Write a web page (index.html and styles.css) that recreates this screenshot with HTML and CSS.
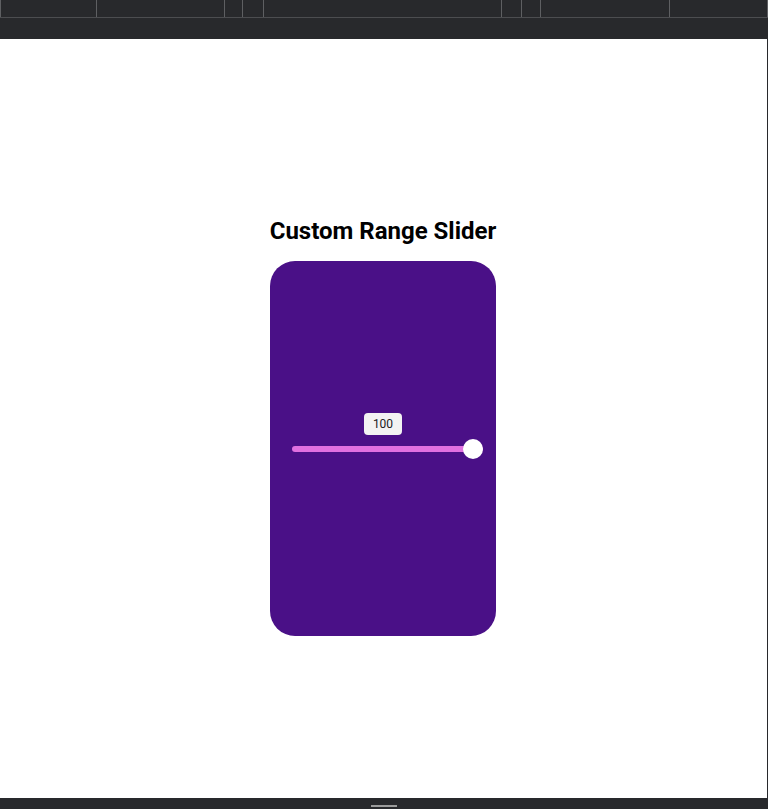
FILE: index.html
```html
<!DOCTYPE html>
<html lang="en">
<head>
<meta charset="utf-8">
<title>Custom Range Slider</title>
<link rel="stylesheet" href="styles.css">
</head>
<body>
<div class="frame">
  <header class="topbar">
    <div class="tabs">
      <span class="seg w96"></span>
      <span class="seg w128"></span>
      <span class="seg w18"></span>
      <span class="seg w21"></span>
      <span class="seg w238"></span>
      <span class="seg w20"></span>
      <span class="seg w19"></span>
      <span class="seg w129"></span>
      <span class="seg w98"></span>
      <span class="seg w1"></span>
    </div>
    <div class="toolbar"></div>
  </header>
  <main class="viewport">
    <h1 class="title">Custom Range Slider</h1>
    <div class="card">
      <div class="slider">
        <span class="badge">100</span>
        <div class="track">
          <span class="thumb"></span>
        </div>
      </div>
    </div>
  </main>
  <footer class="bottombar">
    <span class="handle"></span>
  </footer>
</div>
</body>
</html>
```

FILE: styles.css
```css
* { box-sizing: border-box; }
html, body { margin: 0; padding: 0; }
body {
  background: #ffffff;
  font-family: Roboto, "Liberation Sans", Arial, sans-serif;
}
.frame {
  display: flex;
  flex-direction: column;
  width: 768px;
  height: 809px;
  overflow: hidden;
}
.topbar {
  background: #28292c;
  height: 39px;
  display: flex;
  flex-direction: column;
}
.tabs {
  display: flex;
  height: 18px;
  border-bottom: 1px solid #4c4d50;
}
.seg {
  display: block;
  height: 17px;
  border-left: 1px solid #5e5f62;
}
.w96 { width: 96px; }
.w128 { width: 128px; }
.w18 { width: 18px; }
.w21 { width: 21px; }
.w238 { width: 238px; }
.w20 { width: 20px; }
.w19 { width: 19px; }
.w129 { width: 129px; }
.w98 { width: 98px; }
.w1 { width: 1px; }
.toolbar { flex: 1; }

.viewport {
  flex: 1;
  background: #ffffff;
  border-right: 1px solid #28292c;
  display: flex;
  flex-direction: column;
  align-items: center;
  padding: 178px 1px 0 0;
}
.title {
  margin: 0 0 16px 0;
  font-size: 24px;
  line-height: 28px;
  font-weight: 700;
  color: #000000;
  white-space: nowrap;
}
.card {
  width: 226px;
  height: 375px;
  background: #4a1087;
  border-radius: 25px;
  display: flex;
  align-items: center;
  padding: 0 13px 0 22px;
}
.slider {
  position: relative;
  width: 191px;
  height: 20px;
  display: flex;
  align-items: center;
}
.badge {
  position: absolute;
  left: 72px;
  top: -26px;
  width: 38px;
  height: 22px;
  background: #f3f3f3;
  border-radius: 4px;
  font-size: 12px;
  line-height: 22px;
  text-align: center;
  color: #222222;
}
.track {
  position: relative;
  width: 100%;
  height: 6px;
  background: #e070e0;
  border-radius: 3px;
}
.thumb {
  position: absolute;
  right: 0;
  top: -7px;
  width: 20px;
  height: 20px;
  border-radius: 50%;
  background: #ffffff;
}
.bottombar {
  height: 11px;
  background: #28292c;
  display: flex;
  justify-content: center;
  padding-top: 7px;
}
.handle {
  display: block;
  width: 26px;
  height: 2px;
  background: #9c9c9c;
  margin-left: -1px;
}
```
